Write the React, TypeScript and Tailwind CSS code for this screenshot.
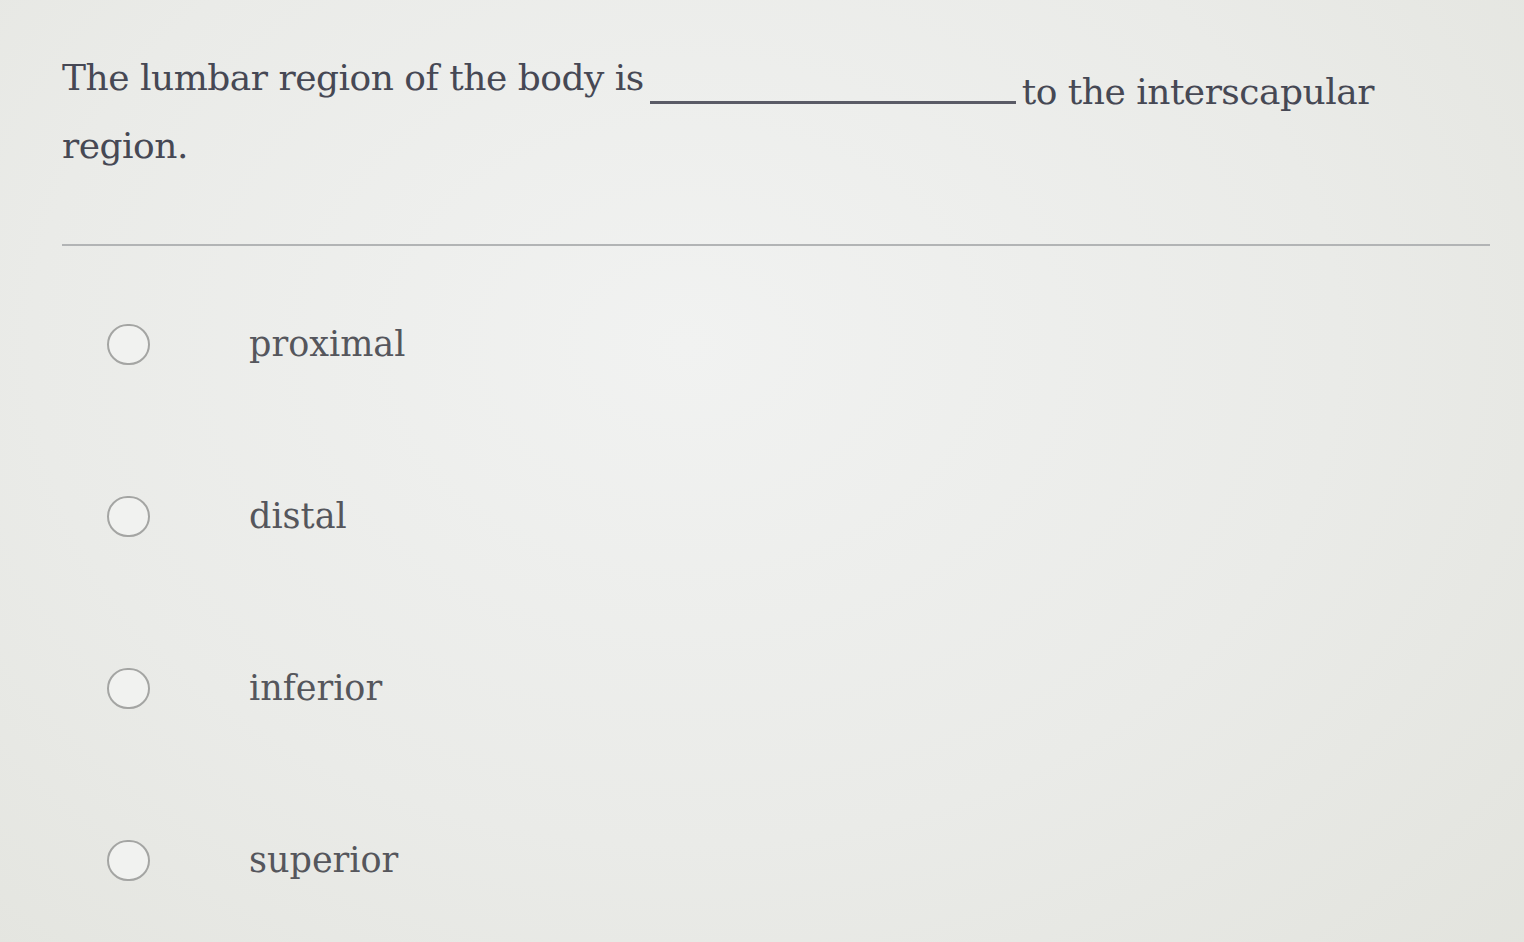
import React from 'react';

const OPTIONS = ['proximal', 'distal', 'inferior', 'superior'];

function Radio() {
  return (
    <span className="block h-[41px] w-[43px] shrink-0 rounded-full border-2 border-[#a4a5a3] bg-[#f1f2f0]" />
  );
}

export default function App() {
  return (
    <main
      className="min-h-screen w-full overflow-hidden bg-[radial-gradient(ellipse_at_45%_35%,#f1f2f1_0%,#eaebe8_55%,#e2e3dd_100%)] text-[#50515b]"
      style={{ fontFamily: '"DejaVu Serif", "Liberation Serif", serif' }}
    >
      <div className="pl-[62px] pr-[34px] pt-[44px]">
        {/* Question stem */}
        <p className="text-[36px] leading-[68px] tracking-[-0.5px] text-[#464854]">
          The lumbar region of the body is
          <span className="mx-[6px] inline-block w-[366px] translate-y-[14px] border-b-[3px] border-[#5a5b66] align-baseline" />
          <span className="relative top-[14px]">to the interscapular</span>
          <br />
          region.
        </p>

        <div className="mt-[64px] h-[2px] w-[1428px] bg-[#b2b4b5]" />

        {/* Answer choices */}
        <ul className="mt-[52px] flex flex-col">
          {OPTIONS.map((opt) => (
            <li key={opt} className="flex h-[172px] items-start">
              <div className="flex h-[92px] items-center gap-[99px] pl-[45px]">
                <Radio />
                <span className="text-[35px] text-[#55565c]">{opt}</span>
              </div>
            </li>
          ))}
        </ul>
      </div>
    </main>
  );
}
